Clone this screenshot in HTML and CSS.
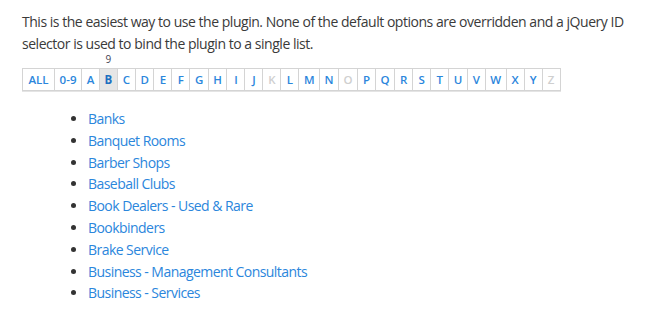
FILE: index.html
```html
<!DOCTYPE html>
<html>
<head>
<meta charset="utf-8">
<link rel="stylesheet" href="styles.css">
</head>
<body>
<div class="page">
  <p class="intro">This is the easiest way to use the plugin. None of the default options are overridden and a jQuery ID selector is used to bind the plugin to a single list.</p>
  <ul class="letters">
    <li class="cell">ALL</li>
    <li class="cell">0-9</li>
    <li class="cell">A</li>
    <li class="cell active">B<span class="count">9</span></li>
    <li class="cell">C</li>
    <li class="cell">D</li>
    <li class="cell">E</li>
    <li class="cell">F</li>
    <li class="cell">G</li>
    <li class="cell">H</li>
    <li class="cell">I</li>
    <li class="cell">J</li>
    <li class="cell disabled">K</li>
    <li class="cell">L</li>
    <li class="cell">M</li>
    <li class="cell">N</li>
    <li class="cell disabled">O</li>
    <li class="cell">P</li>
    <li class="cell">Q</li>
    <li class="cell">R</li>
    <li class="cell">S</li>
    <li class="cell">T</li>
    <li class="cell">U</li>
    <li class="cell">V</li>
    <li class="cell">W</li>
    <li class="cell">X</li>
    <li class="cell">Y</li>
    <li class="cell disabled">Z</li>
  </ul>
  <ul class="listing">
    <li><a href="#">Banks</a></li>
    <li><a href="#">Banquet Rooms</a></li>
    <li><a href="#">Barber Shops</a></li>
    <li><a href="#">Baseball Clubs</a></li>
    <li><a href="#">Book Dealers - Used &amp; Rare</a></li>
    <li><a href="#">Bookbinders</a></li>
    <li><a href="#">Brake Service</a></li>
    <li><a href="#">Business - Management Consultants</a></li>
    <li><a href="#">Business - Services</a></li>
  </ul>
</div>
</body>
</html>
```
FILE: styles.css
```css
html, body {
  margin: 0;
  padding: 0;
  background: #ffffff;
}
.page {
  padding: 11px 0 0 22px;
  font-family: "Open Sans", "Noto Sans", sans-serif;
  color: #3a3a3a;
}
.intro {
  margin: 0;
  width: 620px;
  font-size: 14px;
  line-height: 22px;
  letter-spacing: -0.47px;
}
.letters {
  list-style: none;
  margin: 13px 0 0 0;
  padding: 0;
  display: inline-flex;
  border: 1px solid #d4d4d4;
  box-shadow: 0 1px 0 #e4e4e4;
}
.cell {
  position: relative;
  padding: 0 4.5px;
  min-width: 8px;
  text-align: center;
  height: 21px;
  line-height: 21px;
  font-size: 11.5px;
  font-weight: 600;
  color: #2b86dc;
  border-left: 1px solid #d4d4d4;
}
.cell:first-child {
  border-left: 0;
  padding: 0 5.5px;
}
.cell.active {
  background: #e6e6e6;
  color: #1d6fc0;
  font-weight: 700;
}
.cell.disabled {
  color: #cfcfcf;
}
.count {
  position: absolute;
  left: 0;
  right: 0;
  top: -17px;
  line-height: 14px;
  font-size: 10px;
  font-weight: 400;
  color: #445;
  text-align: center;
}
.listing {
  margin: 17px 0 0 0;
  padding: 0 0 0 66px;
  font-size: 14px;
  line-height: 21.8px;
  color: #333;
}
.listing a {
  color: #2b86dc;
  text-decoration: none;
  letter-spacing: -0.55px;
}
```
